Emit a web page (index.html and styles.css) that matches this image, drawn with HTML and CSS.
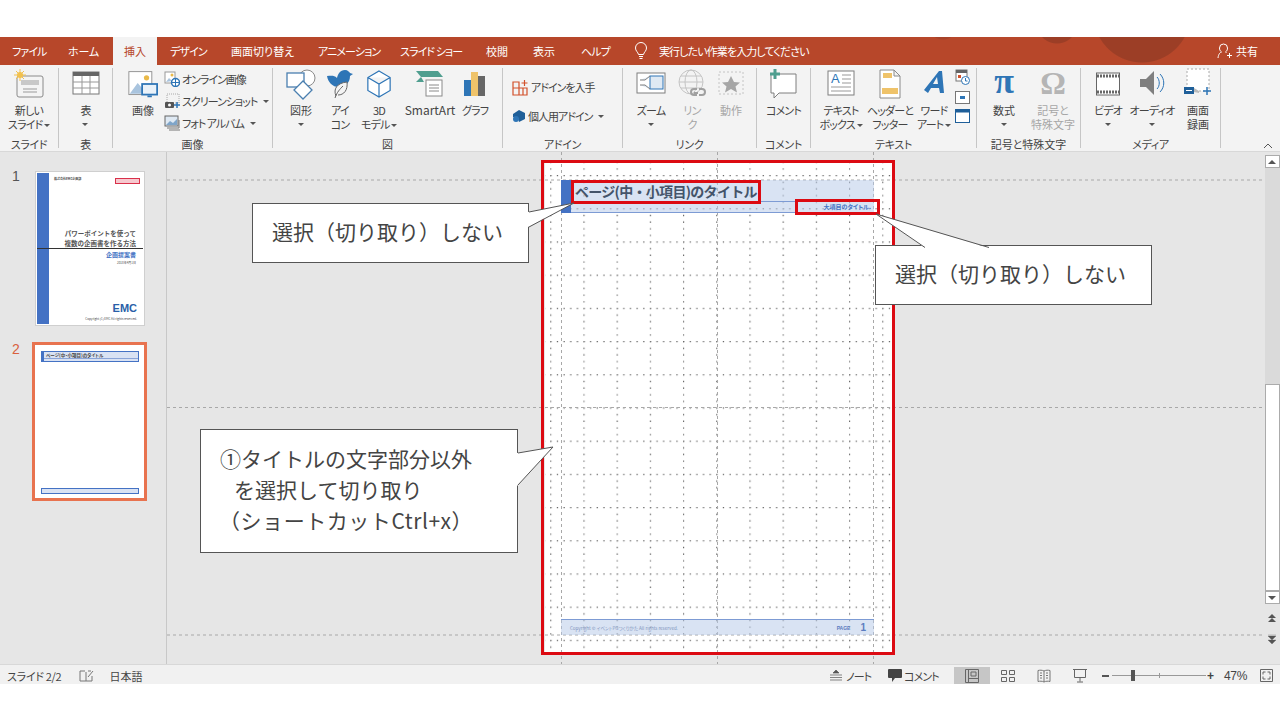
FILE: index.html
```html
<html lang="ja">
<head>
    <meta charset="UTF-8">
    <title>PowerPoint</title>
    <link rel="stylesheet" href="styles.css">
</head>
<body>
    <div class="top-gap"></div>
    <div class="tabs">
        <span class="tab t1">ファイル</span>
        <span class="tab t2">ホーム</span>
        <span class="tab active">挿入</span>
        <span class="tab t3">デザイン</span>
        <span class="tab t4">画面切り替え</span>
        <span class="tab t5">アニメーション</span>
        <span class="tab t6">スライド ショー</span>
        <span class="tab t7">校閲</span>
        <span class="tab t8">表示</span>
        <span class="tab t9">ヘルプ</span>
        <svg class="bulb" width="14" height="18" viewBox="0 0 14 18"><path d="M4.500 12.500C4 10 1.500 9 1.500 6a5.500 5.500 0 0 1 11 0c0 3-2.500 4-3 6.500zM5 14.500h4M5.500 16.500h3" fill="none" stroke="#fff"/></svg>
        <span class="tab search">実行したい作業を入力してください</span>
        <span class="share">
            <svg width="16" height="16" viewBox="0 0 16 16"><path d="M1 15c.5-4 2-5.500 3.500-6C3 8 2.500 6.500 2.500 5a4 4 0 0 1 8 0c0 1.500-.5 3-2 4l1 .5M12.500 10v5M10 12.500h5" fill="none" stroke="#fff"/></svg>
            共有
        </span>
    </div>

    <div class="ribbon">
        <div class="group" style="width:59px">
            <div class="tools">
                <div class="big">
                    <svg width="32" height="32" viewBox="0 0 32 32"><rect x="4" y="8" width="26" height="21" rx="2" fill="#f4f4f4" stroke="#8a8a8a"/><rect x="8" y="12" width="18" height="5" fill="#c8c8c8"/><path d="M10 21h14M10 24h14" stroke="#9a9a9a"/><circle cx="7" cy="7" r="3" fill="#f2c14e"/><path d="M7 1v12M1 7h12M3 3l8 8M11 3l-8 8" stroke="#f2c14e"/></svg>
                    <span class="lab">新しい<br>スライド <i class="caret"></i></span>
                </div>
            </div>
            <div class="name">スライド</div>
        </div>
        <div class="group" style="width:54px">
            <div class="tools">
                <div class="big">
                    <svg width="28" height="32" viewBox="0 0 28 32"><rect x="1" y="4" width="26" height="22" fill="#fff" stroke="#777"/><rect x="1" y="4" width="26" height="4" fill="#666"/><path d="M1 14h26M1 20h26M10 8v18M18 8v18" stroke="#999"/></svg>
                    <span class="lab">表<i class="caret drop"></i></span>
                </div>
            </div>
            <div class="name">表</div>
        </div>
        <div class="group" style="width:160px">
            <div class="tools">
                <div class="big w-image">
                    <svg width="30" height="32" viewBox="0 0 34 32"><rect x="1" y="2" width="26" height="26" fill="#fff" stroke="#8a8a8a"/><path d="M2 27l9-12 6 7 4-3v8z" fill="#a9c4de"/><circle cx="21" cy="9" r="3" fill="#e9b949"/><rect x="16" y="16" width="17" height="12" fill="#eaf2f9" stroke="#2e75b6" stroke-width="2"/><path d="M22 30h5" stroke="#2e75b6" stroke-width="2"/></svg>
                    <span class="lab kj">画像</span>
                </div>
                <div class="stack">
                    <div class="row"><svg width="16" height="16" viewBox="0 0 16 16"><rect x="1" y="1" width="10" height="11" fill="#fff" stroke="#999"/><path d="M2 11l3-4 3 3z" fill="#a9c4de"/><circle cx="8" cy="4" r="1.500" fill="#e9b949"/><circle cx="11.500" cy="11.500" r="4" fill="#fff" stroke="#2e75b6" stroke-width="1.500"/><path d="M8 11.500h7M11.500 8v7" stroke="#2e75b6"/></svg>オンライン画像</div>
                    <div class="row"><svg width="16" height="16" viewBox="0 0 16 16"><rect x="3" y="1" width="12" height="9" fill="none" stroke="#aaa" stroke-dasharray="1 1"/><rect x="1" y="9" width="9" height="6" rx="1" fill="#555"/><circle cx="5.500" cy="12" r="1.500" fill="#fff"/><path d="M13 9v6M10 12h6" stroke="#2e75b6" stroke-width="1.500"/></svg>スクリーンショット <i class="caret"></i></div>
                    <div class="row"><svg width="16" height="16" viewBox="0 0 16 16"><rect x="1" y="1" width="13" height="10" fill="#dfe9f3" stroke="#666"/><path d="M2 10l4-4 3 2 4-4v6z" fill="#7fa5c9"/><path d="M3 13h12v-8M5 15h11" fill="none" stroke="#777"/></svg>フォト アルバム <i class="caret gap-c"></i></div>
                </div>
            </div>
            <div class="name kj">画像</div>
        </div>
        <div class="group" style="width:230px">
            <div class="tools">
                <div class="big w-shape">
                    <svg width="30" height="32" viewBox="0 0 30 32"><circle cx="21" cy="10" r="8" fill="#fff" stroke="#8a8a8a"/><rect x="1" y="5" width="17" height="14" fill="#fff" stroke="#4a7fb0" stroke-width="1.300"/><path d="M17 13l9 9-9 9-9-9z" fill="#fff" stroke="#4a7fb0" stroke-width="1.300"/></svg>
                    <span class="lab kj">図形<i class="caret drop"></i></span>
                </div>
                <div class="big w-icon">
                    <svg width="28" height="32" viewBox="0 0 28 32"><path d="M1 8c4 0 7-1 10 2 1-4 3-8 8-8 3 0 4 2 5 3l3 1-3 2c0 7-5 11-11 11-7 0-11-5-12-11z" fill="#2e75b6"/><path d="M10 28c-3-7 1-13 11-14 1 8-3 13-9 13" fill="#f3f3f3" stroke="#666"/><path d="M9 30c2-6 5-9 8-12" fill="none" stroke="#666"/></svg>
                    <span class="lab">アイ<br>コン</span>
                </div>
                <div class="big w-3d">
                    <svg width="26" height="32" viewBox="0 0 28 32"><path d="M14 2l12 7v14l-12 7-12-7V9zM2 9l12 7 12-7M14 16v14" fill="#fff" stroke="#2e75b6" stroke-width="1.300"/></svg>
                    <span class="lab">3D<br>モデル <i class="caret"></i></span>
                </div>
                <div class="big w-smart">
                    <svg width="30" height="32" viewBox="0 0 30 32"><path d="M1 3h22l5 6H6z" fill="#4f9e8f"/><path d="M6 9l-5 5h8z" fill="#4f9e8f"/><rect x="11" y="12" width="16" height="16" fill="#fff" stroke="#8a8a8a"/><path d="M14 17h10M14 20h10M14 23h10" stroke="#8a8a8a"/></svg>
                    <span class="lab latin">SmartArt</span>
                </div>
                <div class="big w-graph">
                    <svg width="24" height="32" viewBox="0 0 24 32"><rect x="1" y="12" width="7" height="16" fill="#2e75b6"/><rect x="8" y="4" width="7" height="24" fill="#efc36a"/><rect x="15" y="8" width="7" height="20" fill="#666"/></svg>
                    <span class="lab">グラフ</span>
                </div>
            </div>
            <div class="name kj">図</div>
        </div>
        <div class="group" style="width:120px">
            <div class="tools">
                <div class="stack addin">
                    <div class="row"><svg width="17" height="17" viewBox="0 0 17 17"><path d="M1 3h6v13H1zM7 9h8v7H7zM1 9h6M11 9v7" fill="none" stroke="#d2502a" stroke-width="1.200"/><path d="M12.500 1v6M9.500 4h6" stroke="#d2502a" stroke-width="1.200"/></svg>アドインを入手</div>
                    <div class="row"><svg width="14" height="14" viewBox="0 0 14 14"><path d="M1 5l6-4 6 3v6l-6 3-1-4-5-1z" fill="#1f5f99"/><circle cx="4" cy="10" r="3" fill="#2e75b6"/></svg>個人用アドイン <i class="caret gap-c"></i></div>
                </div>
            </div>
            <div class="name">アドイン</div>
        </div>
        <div class="group" style="width:134px">
            <div class="tools">
                <div class="big w-zoom">
                    <svg width="30" height="32" viewBox="0 0 30 32"><rect x="1" y="5" width="28" height="20" fill="#fff" stroke="#7f7f7f"/><rect x="14" y="8" width="13" height="13" fill="#dfe9f3" stroke="#2e75b6"/><path d="M4 12h5l5-4M4 17h5l5 4" fill="#dfe9f3" stroke="#7f7f7f"/></svg>
                    <span class="lab">ズーム<i class="caret drop"></i></span>
                </div>
                <div class="big off w-link">
                    <svg width="30" height="32" viewBox="0 0 30 32"><circle cx="14" cy="14" r="12" fill="none" stroke="#c4c4c4"/><ellipse cx="14" cy="14" rx="6" ry="12" fill="none" stroke="#c4c4c4"/><path d="M2 14h24M4 8h20M4 20h20" stroke="#c4c4c4"/><path d="M17 25h4M22 21h3a3 3 0 0 1 0 6h-3M20 27h-3a3 3 0 0 1 0-6h3" fill="none" stroke="#a0a0a0" stroke-width="2"/></svg>
                    <span class="lab">リン<br>ク</span>
                </div>
                <div class="big off w-act">
                    <svg width="26" height="32" viewBox="0 0 26 32"><rect x="1" y="4" width="24" height="22" fill="none" stroke="#c4c4c4" stroke-dasharray="2 2"/><path d="M13 8l3 6 6 .5-4.500 4 1.500 6-6-3.500-6 3.500 1.500-6L4 14.500l6-.5z" fill="#a6a6a6"/></svg>
                    <span class="lab kj">動作</span>
                </div>
            </div>
            <div class="name">リンク</div>
        </div>
        <div class="group" style="width:54px">
            <div class="tools">
                <div class="big">
                    <svg width="30" height="32" viewBox="0 0 30 32"><path d="M3 6h25v19H11l-5 5v-5H3z" fill="#fff" stroke="#7f7f7f"/><path d="M7 1v10M2 6h10" stroke="#4f9e8f" stroke-width="3"/></svg>
                    <span class="lab">コメント</span>
                </div>
            </div>
            <div class="name">コメント</div>
        </div>
        <div class="group" style="width:166px">
            <div class="tools">
                <div class="big w-text">
                    <svg width="28" height="32" viewBox="0 0 28 32"><rect x="1" y="3" width="26" height="24" fill="#fff" stroke="#7f7f7f"/><text x="4" y="15" class="glyph">A</text><path d="M15 7h9M15 11h9M15 15h9M4 19h20M4 23h20" stroke="#999"/></svg>
                    <span class="lab">テキスト<br>ボックス <i class="caret"></i></span>
                </div>
                <div class="big w-head">
                    <svg width="24" height="32" viewBox="0 0 24 32"><path d="M2 2h14l6 6v22H2zM16 2v6h6" fill="#fff" stroke="#8a8a8a"/><rect x="5" y="5" width="9" height="5" fill="#efc36a"/><rect x="4" y="20" width="16" height="6" fill="#efc36a"/></svg>
                    <span class="lab">ヘッダーと<br>フッター</span>
                </div>
                <div class="big w-word">
                    <svg width="24" height="32" viewBox="0 0 24 32"><path d="M2 22L17 3h3l2 22h-4l-1-5H9l-3 5zM11 16h5l-1-7z" fill="#2e75b6" fill-rule="evenodd"/></svg>
                    <span class="lab">ワード<br>アート <i class="caret"></i></span>
                </div>
                <div class="mini">
                    <svg width="15" height="17" viewBox="0 0 15 17"><rect x="1" y="1" width="11" height="11" fill="#fff" stroke="#777"/><rect x="1" y="1" width="11" height="3" fill="#666"/><rect x="3" y="6" width="3" height="3" fill="#d2502a"/><circle cx="10.500" cy="11.500" r="4" fill="#fff" stroke="#2e75b6"/><path d="M10.500 9v3h2" fill="none" stroke="#2e75b6"/></svg>
                    <svg width="15" height="13" viewBox="0 0 15 13"><rect x=".5" y=".5" width="14" height="12" fill="#fff" stroke="#777"/><rect x="5" y="5" width="5" height="3" fill="#2e75b6"/></svg>
                    <svg width="15" height="14" viewBox="0 0 15 14"><rect x=".5" y=".5" width="14" height="13" fill="#fff" stroke="#1f5f99"/><rect x=".5" y=".5" width="14" height="3" fill="#1f5f99"/></svg>
                </div>
            </div>
            <div class="name">テキスト</div>
        </div>
        <div class="group" style="width:104px">
            <div class="tools">
                <div class="big w-eq">
                    <span class="pi">π</span>
                    <span class="lab kj">数式<i class="caret drop"></i></span>
                </div>
                <div class="big off w-sym">
                    <span class="omega">Ω</span>
                    <span class="lab kj">記号と<br>特殊文字</span>
                </div>
            </div>
            <div class="name kj">記号と特殊文字</div>
        </div>
        <div class="group" style="width:140px">
            <div class="tools">
                <div class="big w-video">
                    <svg width="24" height="32" viewBox="0 0 24 32"><rect x=".5" y="5" width="23" height="22" fill="#fff" stroke="#666"/><path d="M1 8h22M1 24h22" stroke="#666" stroke-width="3" stroke-dasharray="2 1"/></svg>
                    <span class="lab">ビデオ<i class="caret drop"></i></span>
                </div>
                <div class="big w-audio">
                    <svg width="26" height="32" viewBox="0 0 26 32"><path d="M1 11h6l8-8v24l-8-8H1z" fill="#7f7f7f"/><path d="M18 9c3 3 3 9 0 12M21 6c5 5 5 13 0 18" fill="none" stroke="#2e75b6"/></svg>
                    <span class="lab">オーディオ<i class="caret drop"></i></span>
                </div>
                <div class="big w-rec">
                    <svg width="30" height="32" viewBox="0 0 30 32"><rect x="4" y="1" width="22" height="22" fill="#fff" stroke="#aaa" stroke-dasharray="2 2"/><rect x="1" y="19" width="10" height="7" fill="#1f5f99"/><path d="M3 22.500h6" stroke="#fff"/><path d="M11 20l5 3v2l-5-1z" fill="#bbb"/><path d="M20 23h8M24 19v8" stroke="#2e75b6" stroke-width="1.500"/></svg>
                    <span class="lab kj">画面<br>録画</span>
                </div>
            </div>
            <div class="name">メディア</div>
        </div>
        <svg class="collapse" width="10" height="6" viewBox="0 0 10 6"><path d="M1 5l4-4 4 4" fill="none" stroke="#555"/></svg>
    </div>

    <div class="main">
        <div class="thumbs">
            <div class="thumb-row">
                <span class="num">1</span>
                <div class="thumb first">
                    <div class="t-bar"></div>
                    <span class="t-corp">株式会社EMC企画部</span>
                    <span class="t-badge"></span>
                    <span class="t-title">パワーポイントを使って<br>複数の企画書を作る方法</span>
                    <span class="t-line"></span>
                    <span class="t-sub">企画提案書</span>
                    <span class="t-date">2018年4月1日</span>
                    <span class="t-logo">EMC</span>
                    <span class="t-copy">Copyright (C) EMC All rights reserved.</span>
                </div>
            </div>
            <div class="thumb-row">
                <span class="num cur">2</span>
                <div class="thumb second">
                    <div class="mini-head"><span>ページ(中・小項目)のタイトル</span></div>
                    <div class="mini-foot"></div>
                </div>
            </div>
        </div>

        <div class="canvas">
            <div class="slide"></div>
            <svg class="guides" width="1114" height="512" viewBox="0 0 1114 512">
                <defs>
                    <pattern id="grid" x="18" y="23" width="33.200" height="33.200" patternUnits="userSpaceOnUse">
                        <path d="M.5 0v33.200" stroke="#666" stroke-width="1.300" stroke-dasharray="1.300 5.340" fill="none"/>
                        <path d="M0 .5h33.200" stroke="#666" stroke-width="1.300" stroke-dasharray="1.300 5.340" fill="none"/>
                    </pattern>
                </defs>
                <rect x="378" y="8" width="348" height="494" fill="url(#grid)"/>
                <path d="M0 28h1096M0 255.500h1096M0 483h1096M394.500 0v512M550.500 0v512M706.500 0v512" stroke="#a8a8a8" stroke-dasharray="3 3" fill="none"/>
            </svg>

            <div class="title-bar">
                <div class="title-mark"></div>
                <div class="title-main">ページ(中・小項目)のタイトル</div>
                <div class="title-sub">大項目のタイトル.</div>
            </div>
            <div class="foot-bar">
                <span class="foot-copy">Copyright © イベントPGつくりかた All rights reserved.</span>
                <span class="foot-page">PAGE</span>
                <span class="foot-no">1</span>
            </div>

            <div class="red-slide"></div>
            <div class="red-title"></div>
            <div class="red-sub"></div>

            <div class="callout c-one">選択（切り取り）しない
                <svg class="tail tail-one" width="48" height="30" viewBox="0 0 48 30"><path d="M0 10L46 1 0 25z" fill="#fff"/><path d="M1 10L46 1 1 25" fill="none" stroke="#555"/></svg>
            </div>
            <div class="callout c-two">選択（切り取り）しない
                <svg class="tail tail-two" width="115" height="36" viewBox="0 0 115 36"><path d="M50 35L1 1l113 34z" fill="#fff"/><path d="M50 34.500L1 1l113 33.500" fill="none" stroke="#555"/></svg>
            </div>
            <div class="callout c-three">①タイトルの文字部分以外<br>&nbsp;&nbsp;&nbsp;を選択して切り取り<br><span class="wide">（ショートカットCtrl+x）</span>
                <svg class="tail tail-three" width="38" height="42" viewBox="0 0 38 42"><path d="M0 7L36 1 0 40z" fill="#fff"/><path d="M1 7L36 1 1 39" fill="none" stroke="#555"/></svg>
            </div>

            <div class="scroll">
                <span class="s-btn"><i class="arr up"></i></span>
                <span class="s-track"><span class="s-thumb"></span></span>
                <span class="s-btn"><i class="arr down"></i></span>
                <svg class="s-page" width="10" height="32" viewBox="0 0 10 32"><path d="M5 1L1 5h8zM5 5L1 9h8zM1 10h8" fill="#555"/><path d="M1 22h8M5 27l-4-4h8zM5 31l-4-4h8z" fill="#555" stroke="#555" stroke-width=".3"/></svg>
            </div>
        </div>
    </div>

    <div class="status">
        <span class="st-count">スライド 2/2</span>
        <svg class="st-book" width="15" height="14" viewBox="0 0 15 14"><path d="M6 2H1v10h6M7 12V3M9 2h3M7 12h6V7M9 8l5-6" fill="none" stroke="#777"/></svg>
        <span class="st-lang">日本語</span>
        <div class="st-right">
            <svg width="12" height="11" viewBox="0 0 12 11"><path d="M6 0L3 3h6zM0 5h12M0 7.500h12M0 10h12" fill="#555" stroke="#555" stroke-width=".7"/></svg>
            <span class="st-note">ノート</span>
            <svg class="st-cicon" width="14" height="13" viewBox="0 0 14 13"><path d="M1 0h12a1 1 0 0 1 1 1v7a1 1 0 0 1-1 1H7l-3 4V9H1a1 1 0 0 1-1-1V1a1 1 0 0 1 1-1z" fill="#444"/></svg>
            <span class="st-comment">コメント</span>
            <span class="view on"><svg width="14" height="14" viewBox="0 0 14 14"><path d="M.5.5h13v13H.5zM3.500.5v13M3.500 9.500h10M6 3h5v4H6z" fill="none" stroke="#666"/></svg></span>
            <span class="view"><svg width="14" height="12" viewBox="0 0 14 12"><path d="M.5.500h5v4h-5zM8.500.500h5v4h-5zM.5 7.500h5v4h-5zM8.500 7.500h5v4h-5z" fill="none" stroke="#666"/></svg></span>
            <span class="view"><svg width="14" height="14" viewBox="0 0 14 14"><path d="M7 2C5 1 3 1 1 1.500v11C3 12 5 12 7 13c2-1 4-1 6-.5v-11C11 1 9 1 7 2zM7 2v11M3 4h2M3 6.500h2M3 9h2M9 4h2M9 6.500h2M9 9h2" fill="none" stroke="#777"/></svg></span>
            <span class="view"><svg width="14" height="14" viewBox="0 0 14 14"><path d="M0 .5h14M1.500 1v7.500h11V1M7 8.500v4M4 13h6" fill="none" stroke="#666"/></svg></span>
            <span class="minus"></span>
            <span class="slider"><span class="s-tick"></span><span class="s-knob"></span></span>
            <span class="plus">+</span>
            <span class="pct">47%</span>
            <svg class="fit" width="13" height="13" viewBox="0 0 13 13"><path d="M.5.500h12v12H.5zM3 3h2.500M3 3v2.500M10 3H7.500M10 3v2.500M3 10h2.500M3 10V7.500M10 10H7.500M10 10V7.500" fill="none" stroke="#666"/></svg>
        </div>
    </div>
</body>
</html>
```

FILE: styles.css
```css
* {
    box-sizing: border-box;
}
html, body {
    margin: 0;
    padding: 0;
    width: 1280px;
    height: 720px;
    overflow: hidden;
    background: #fff;
}
body {
    font-family: "Noto Sans CJK JP", "Liberation Sans", sans-serif;
    font-feature-settings: "palt";
    font-size: 11px;
    color: #444;
    display: flex;
    flex-direction: column;
}
i {
    font-style: normal;
}
.top-gap {
    height: 37px;
    flex: none;
}

/* title tabs */
.tabs {
    height: 28px;
    flex: none;
    display: flex;
    align-items: center;
    color: #fff;
    font-size: 11px;
    background:
        radial-gradient(circle at 1142px -23px, #9c3e26 0 48px, transparent 49px),
        radial-gradient(circle at 1057px -14px, #9c3e26 0 20px, transparent 21px),
        radial-gradient(circle at 943px -13px, #a74229 0 15px, transparent 16px),
        #b7472a;
}
.tab {
    white-space: nowrap;
    letter-spacing: -.9px;
}
.t1 { margin-left: 12px; width: 56px; }
.t2 { width: 45px; letter-spacing: -.2px; }
.tabs .active {
    width: 44px;
    height: 28px;
    line-height: 28px;
    text-align: center;
    background: #f3f3f3;
    color: #b7472a;
    margin-right: 13px;
    letter-spacing: 0;
}
.t3 { width: 61px; }
.t4 { width: 87px; letter-spacing: 0; }
.t5 { width: 82px; }
.t6 { width: 86px; }
.t7 { width: 47px; letter-spacing: 0; }
.t8 { width: 48px; letter-spacing: 0; }
.t9 { width: 27px; }
.bulb {
    margin-left: 26px;
    margin-right: 11px;
    flex: none;
}
.share {
    margin-left: auto;
    margin-right: 22px;
    display: flex;
    align-items: center;
    gap: 3px;
}

/* ribbon */
.ribbon {
    height: 87px;
    flex: none;
    display: flex;
    background: #f3f3f3;
    border-bottom: 1px solid #d8d8d8;
    position: relative;
    padding-top: 3px;
}
.group {
    height: 80px;
    flex: none;
    display: flex;
    flex-direction: column;
    border-right: 1px solid #c6c6c6;
}
.tools {
    flex: 1;
    display: flex;
    justify-content: center;
    min-height: 0;
}
.name {
    text-align: center;
    font-size: 11px;
    line-height: 14px;
    height: 14px;
    margin-bottom: -3px;
    color: #444;
    letter-spacing: -.3px;
}
.big {
    display: flex;
    flex-direction: column;
    align-items: center;
    flex: none;
}
.big svg {
    display: block;
    height: 32px;
    flex: none;
}
.lab {
    display: block;
    text-align: center;
    font-size: 11px;
    line-height: 14px;
    margin-top: 3px;
    white-space: nowrap;
    letter-spacing: -.8px;
}
.kj {
    letter-spacing: 0;
}
.latin {
    font-size: 12px;
    letter-spacing: 0;
}
.off .lab {
    color: #a6a6a6;
}
.caret {
    display: inline-block;
    width: 0;
    height: 0;
    border-left: 3px solid transparent;
    border-right: 3px solid transparent;
    border-top: 3px solid #555;
    vertical-align: 2px;
}
.caret.drop {
    display: block;
    margin: 6px auto 0;
}
.gap-c {
    margin-left: 6px;
}
.stack {
    display: flex;
    flex-direction: column;
    gap: 4px;
    padding-top: 2px;
}
.row {
    display: flex;
    align-items: center;
    gap: 2px;
    height: 18px;
    white-space: nowrap;
    letter-spacing: -1px;
}
.row .caret {
    margin-left: 4px;
    vertical-align: 0;
}
.w-image { width: 34px; }
.group:nth-child(3) .tools { justify-content: flex-start; gap: 0; }
.group:nth-child(3) .big { margin-left: 13px; margin-right: 0; }
.group:nth-child(3) .stack { margin-left: 4px; }
.group:nth-child(4) .tools { justify-content: flex-start; padding-left: 11px; }
.w-shape { width: 34px; margin-right: 7px; }
.w-icon { width: 30px; margin-right: 4px; }
.w-3d { width: 40px; margin-right: 5px; }
.w-smart { width: 52px; margin-right: 5px; }
.w-graph { width: 28px; }
.stack.addin {
    gap: 11px;
    padding-top: 10px;
    width: 100%;
    padding-left: 9px;
}
.group:nth-child(6) .tools { justify-content: flex-start; padding-left: 12px; }
.w-zoom { width: 32px; margin-right: 9px; }
.w-link { width: 32px; margin-right: 9px; }
.w-act { width: 28px; }
.group:nth-child(8) .tools { justify-content: flex-start; padding-left: 9px; }
.w-text { width: 42px; margin-right: 3px; }
.w-head { width: 50px; margin-right: 1px; }
.w-word { width: 36px; margin-right: 3px; }
.mini {
    display: flex;
    flex-direction: column;
    gap: 5px;
    padding-top: 1px;
}
.mini svg { display: block; }
.group:nth-child(9) .tools { justify-content: flex-start; padding-left: 10px; }
.w-eq { width: 34px; margin-right: 9px; }
.w-sym { width: 46px; }
.pi {
    height: 32px;
    font: bold 36px/26px "Liberation Serif", serif;
    color: #2e75b6;
}
.omega {
    height: 32px;
    font: bold 32px/30px "Liberation Serif", serif;
    color: #b5b5b5;
}
.group:nth-child(10) .tools { justify-content: flex-start; padding-left: 14px; }
.w-video { width: 26px; margin-right: 8px; }
.w-audio { width: 46px; margin-right: 8px; }
.w-rec { width: 30px; }
.glyph {
    font: 13px "Liberation Sans", sans-serif;
    fill: #2e75b6;
}
.collapse {
    position: absolute;
    right: 7px;
    top: 78px;
}

/* main area */
.main {
    height: 512px;
    flex: none;
    display: flex;
    background: #e6e6e6;
}
.thumbs {
    width: 167px;
    flex: none;
    border-right: 1px solid #c8c8c8;
    padding-top: 19px;
    display: flex;
    flex-direction: column;
    gap: 16px;
}
.thumb-row {
    position: relative;
    padding-left: 35px;
}
.num {
    position: absolute;
    left: 12px;
    top: -3px;
    font: 14px "Liberation Sans", sans-serif;
    color: #555;
}
.num.cur {
    color: #d9603e;
    top: -1px;
}
.thumb {
    position: relative;
    background: #fff;
    overflow: hidden;
}
.first {
    width: 110px;
    height: 155px;
    border: 1px solid #cfcfcf;
}
.second {
    width: 115px;
    height: 159px;
    margin-left: -3px;
    border: 3px solid #e8734f;
}
.t-bar {
    position: absolute;
    left: 1px;
    top: 1px;
    bottom: 1px;
    width: 12px;
    background: #4472c4;
}
.t-corp {
    position: absolute;
    left: 18px;
    top: 5px;
    font-size: 3px;
    font-weight: bold;
    white-space: nowrap;
}
.t-badge {
    position: absolute;
    left: 79px;
    top: 6px;
    width: 25px;
    height: 6px;
    border: 1.500px solid #d9304a;
    background: #f6c9cf;
}
.t-title {
    position: absolute;
    right: 8px;
    top: 56px;
    text-align: right;
    font-size: 6.500px;
    font-feature-settings: normal;
    font-weight: bold;
    line-height: 10px;
    color: #555;
    white-space: nowrap;
}
.t-line {
    position: absolute;
    left: 1px;
    right: 1px;
    top: 76px;
    height: 1px;
    background: #333;
}
.t-sub {
    position: absolute;
    right: 8px;
    top: 78px;
    font-size: 6px;
    font-weight: bold;
    color: #4472c4;
}
.t-date {
    position: absolute;
    right: 8px;
    top: 89px;
    font-size: 3px;
}
.t-logo {
    position: absolute;
    right: 7px;
    top: 131px;
    font: bold 11px/11px "Liberation Sans", sans-serif;
    color: #2a5fa8;
}
.t-copy {
    position: absolute;
    right: 7px;
    top: 145px;
    font-size: 3px;
    white-space: nowrap;
}
.mini-head {
    position: absolute;
    left: 6px;
    top: 6px;
    width: 98px;
    height: 11px;
    background: #d9e2f3;
    border: 1px solid #4472c4;
    border-left-width: 3px;
    font-size: 4.500px;
    line-height: 7px;
    padding-left: 2px;
    font-weight: bold;
    white-space: nowrap;
}
.mini-head::after {
    content: "";
    position: absolute;
    left: 0;
    right: 0;
    top: 6px;
    height: 1px;
    background: #8aa4d8;
}
.mini-foot {
    position: absolute;
    left: 6px;
    top: 143px;
    width: 98px;
    height: 6px;
    background: #d9e2f3;
    border: 1px solid #4472c4;
}

/* slide canvas */
.canvas {
    position: relative;
    width: 1113px;
    flex: none;
    overflow: hidden;
}
.guides {
    position: absolute;
    left: 0;
    top: 0;
}
.slide {
    position: absolute;
    left: 378px;
    top: 8px;
    width: 348px;
    height: 494px;
    background: #fff;
}
.title-bar {
    position: absolute;
    left: 394px;
    top: 28px;
    width: 313px;
    height: 33px;
    background: rgba(180, 199, 231, .5);
    border-bottom: 1.500px solid #7d9bd4;
}
.title-mark {
    position: absolute;
    left: 0;
    top: 0;
    width: 10px;
    height: 33px;
    background: #4472c4;
}
.title-main {
    position: absolute;
    left: 14px;
    top: 0;
    font-size: 14px;
    font-feature-settings: normal;
    line-height: 22px;
    font-weight: bold;
    color: #44546a;
    white-space: nowrap;
    letter-spacing: -.7px;
}
.title-bar::after {
    content: "";
    position: absolute;
    left: 10px;
    right: 0;
    top: 21px;
    height: 1px;
    background: #7d9bd4;
}
.title-sub {
    position: absolute;
    right: 3px;
    top: 21px;
    font-size: 6px;
    line-height: 11px;
    font-weight: bold;
    color: #4472c4;
    white-space: nowrap;
}
.foot-bar {
    position: absolute;
    left: 394px;
    top: 467px;
    width: 313px;
    height: 16px;
    background: rgba(180, 199, 231, .5);
    border-top: 1px solid #7d9bd4;
    display: flex;
    align-items: center;
    color: #7f93bd;
    padding-left: 9px;
}
.foot-copy {
    font-size: 4.500px;
    white-space: nowrap;
}
.foot-page {
    margin-left: auto;
    font: bold 5px "Liberation Sans", sans-serif;
    color: #5b7cc0;
}
.foot-no {
    font: bold 10px "Liberation Sans", sans-serif;
    color: #5b7cc0;
    margin-left: 10px;
    margin-right: 8px;
}
.red-slide,
.red-title,
.red-sub {
    position: absolute;
    border: 3px solid #dc0a12;
}
.red-slide {
    left: 374px;
    top: 8px;
    width: 354px;
    height: 495px;
}
.red-title {
    left: 404px;
    top: 28px;
    width: 190px;
    height: 24px;
}
.red-sub {
    left: 628px;
    top: 47px;
    width: 85px;
    height: 16px;
}
.callout {
    position: absolute;
    background: #fff;
    border: 1px solid #555;
    color: #444;
    font-size: 21px;
    font-feature-settings: normal;
    line-height: 31px;
    padding-left: 19px;
    white-space: nowrap;
}
.wide {
    letter-spacing: .55px;
    margin-left: -1px;
}
.c-one {
    left: 85px;
    top: 51px;
    width: 277px;
    height: 60px;
    padding-top: 12px;
}
.c-two {
    left: 708px;
    top: 93px;
    width: 277px;
    height: 60px;
    padding-top: 12px;
}
.c-three {
    left: 33px;
    top: 277px;
    width: 318px;
    height: 124px;
    padding-top: 13px;
}
.tail {
    position: absolute;
}
.tail-one {
    left: 275px;
    top: -2px;
}
.tail-two {
    left: -1px;
    top: -33px;
}
.tail-three {
    left: 316px;
    top: 16px;
}

/* scrollbar */
.scroll {
    position: absolute;
    left: 1097px;
    top: 3px;
    width: 16px;
    height: 490px;
    display: flex;
    flex-direction: column;
    align-items: center;
}
.s-btn {
    width: 15px;
    height: 13px;
    flex: none;
    background: #fff;
    border: 1px solid #ababab;
    display: flex;
    align-items: center;
    justify-content: center;
}
.arr {
    width: 0;
    height: 0;
    border-left: 4px solid transparent;
    border-right: 4px solid transparent;
}
.arr.up { border-bottom: 4px solid #555; }
.arr.down { border-top: 4px solid #555; }
.s-track {
    width: 15px;
    flex: 1;
    background: #dadada;
    display: flex;
    align-items: flex-end;
}
.s-thumb {
    width: 15px;
    height: 207px;
    background: #fff;
    border: 1px solid #ababab;
}
.s-page {
    flex: none;
    margin-top: 9px;
}

/* status bar */
.status {
    height: 20px;
    flex: none;
    display: flex;
    align-items: center;
    background: #f1f1f1;
    border-top: 1px solid #d8d8d8;
    padding: 2px 0 0 7px;
    font-size: 11px;
    letter-spacing: -.3px;
    color: #444;
}
.st-book {
    margin-left: 18px;
}
.st-lang {
    margin-left: 15px;
    letter-spacing: 0;
}
.st-right {
    margin-left: auto;
    display: flex;
    align-items: center;
    height: 17px;
}
.st-note {
    margin-left: 4px;
    width: 30px;
    letter-spacing: -.9px;
}
.st-cicon {
    margin-left: 12px;
}
.st-comment {
    margin-left: 2px;
    width: 50px;
    letter-spacing: -.9px;
}
.view {
    width: 36px;
    height: 17px;
    display: flex;
    align-items: center;
    justify-content: center;
}
.view.on {
    background: #c6c6c6;
}
.minus {
    width: 7px;
    height: 2px;
    background: #555;
    margin-left: 4px;
}
.slider {
    position: relative;
    width: 94px;
    height: 1px;
    background: #999;
    margin-left: 3px;
}
.s-tick {
    position: absolute;
    left: 47px;
    top: -2px;
    width: 1px;
    height: 5px;
    background: #999;
}
.s-knob {
    position: absolute;
    left: 19px;
    top: -5px;
    width: 4px;
    height: 11px;
    background: #555;
}
.plus {
    font: bold 12px "Liberation Sans", sans-serif;
    margin-left: 1px;
    width: 17px;
}
.pct {
    font: 12px "Liberation Sans", sans-serif;
    width: 36px;
}
.fit {
    margin-right: 7px;
}
```
